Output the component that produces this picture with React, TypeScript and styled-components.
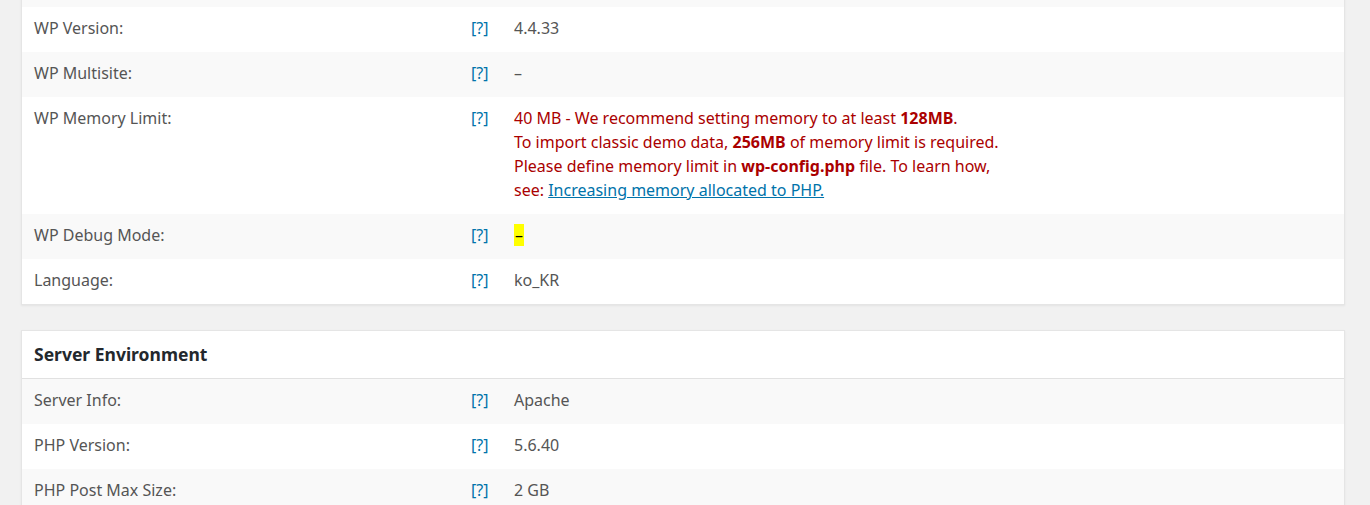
import React, { FunctionComponent, ReactNode } from 'react';
import styled, { createGlobalStyle } from 'styled-components';

const GlobalStyle = createGlobalStyle`
  html, body {
    margin: 0;
    padding: 0;
    background: #f1f1f1;
    overflow: hidden;
  }
  body {
    font-family: 'Noto Sans', 'Open Sans', sans-serif;
    font-size: 16px;
    color: #555;
  }
`;

// the screenshot is taken part-way down the status page
const Page = styled.div`
  padding: 0 25px 40px 21px;
  margin-top: -39px;
  display: flex;
  flex-direction: column;
  gap: 25px;
`;

const Card = styled.section`
  background: #fff;
  border: 1px solid #e5e5e5;
  box-shadow: 0 1px 2px rgba(0, 0, 0, 0.06);
`;

const CardHeader = styled.h2`
  margin: 0;
  padding: 12px 12px 12px;
  font-size: 17.5px;
  line-height: 23px;
  font-weight: 700;
  color: #23282d;
  border-bottom: 1px solid #e1e1e1;
`;

const Row = styled.div<{ striped?: boolean }>`
  display: grid;
  grid-template-columns: 437px 43px 1fr;
  background: ${(props) => (props.striped ? '#f9f9f9' : '#fff')};
`;

const Cell = styled.div`
  padding: 9px 12px 12px;
  line-height: 24px;
`;

const HelpCell = styled(Cell)`
  padding-left: 12px;
  padding-right: 0;
  color: #0073aa;
`;

const Error = styled.span`
  color: #a00;

  strong {
    font-weight: 700;
  }
`;

const DocLink = styled.a`
  color: #0073aa;
  text-decoration: underline;
`;

const Mark = styled.mark`
  background: #ff0;
  color: #000;
  padding: 0 1px;
`;

type Item = { label: string; value: ReactNode };

const wpItems: Item[] = [
  { label: 'WP Max Upload Size:', value: '2 GB' },
  { label: 'WP Version:', value: '4.4.33' },
  { label: 'WP Multisite:', value: '–' },
  {
    label: 'WP Memory Limit:',
    value: (
      <Error>
        40 MB - We recommend setting memory to at least <strong>128MB</strong>.
        <br />
        To import classic demo data, <strong>256MB</strong> of memory limit is required.
        <br />
        Please define memory limit in <strong>wp-config.php</strong> file. To learn how,
        <br />
        see: <DocLink href="#">Increasing memory allocated to PHP.</DocLink>
      </Error>
    ),
  },
  { label: 'WP Debug Mode:', value: <Mark>–</Mark> },
  { label: 'Language:', value: 'ko_KR' },
];

const serverItems: Item[] = [
  { label: 'Server Info:', value: 'Apache' },
  { label: 'PHP Version:', value: '5.6.40' },
  { label: 'PHP Post Max Size:', value: '2 GB' },
  { label: 'PHP Time Limit:', value: '30' },
];

const StatusRows: FunctionComponent<{ items: Item[] }> = ({ items }) => (
  <>
    {items.map((item, i) => (
      <Row key={item.label} striped={i % 2 === 0}>
        <Cell>{item.label}</Cell>
        <HelpCell>[?]</HelpCell>
        <Cell>{item.value}</Cell>
      </Row>
    ))}
  </>
);

const App: FunctionComponent = () => {
  return (
    <>
      <GlobalStyle />
      <Page>
        <Card>
          <StatusRows items={wpItems} />
        </Card>
        <Card>
          <CardHeader>Server Environment</CardHeader>
          <StatusRows items={serverItems} />
        </Card>
      </Page>
    </>
  );
};

export default App;
